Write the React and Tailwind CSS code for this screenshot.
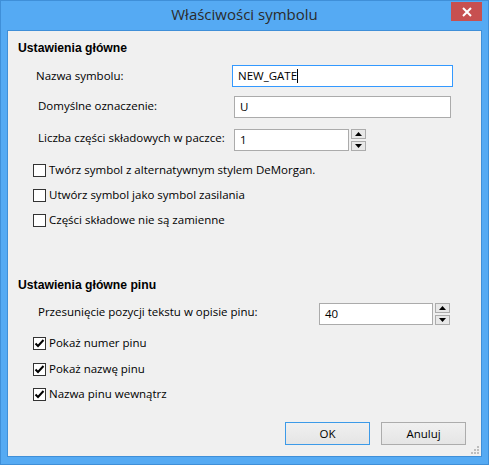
import React from "react";

const ui = { fontFamily: '"Open Sans", "Noto Sans", sans-serif' };
const bold = { fontFamily: '"Liberation Sans", Arial, sans-serif' };

function Spinner() {
  return (
    <div className="flex flex-col gap-[2px] ml-[2px]">
      <div className="w-[15px] h-[10px] bg-[#E8E8E8] border border-[#ACACAC] flex items-center justify-center">
        <svg width="7" height="4" viewBox="0 0 7 4"><path d="M0 4 L3.5 0 L7 4 Z" fill="#000" /></svg>
      </div>
      <div className="w-[15px] h-[10px] bg-[#E8E8E8] border border-[#ACACAC] flex items-center justify-center">
        <svg width="7" height="4" viewBox="0 0 7 4"><path d="M0 0 L3.5 4 L7 0 Z" fill="#000" /></svg>
      </div>
    </div>
  );
}

function CheckRow({ label, checked, className = "" }) {
  return (
    <div className={"flex items-center h-[16px] pl-[25px] " + className}>
      <div className="w-[13px] h-[13px] border border-[#333] bg-white flex items-center justify-center">
        {checked && (
          <svg width="11" height="11" viewBox="0 0 11 11">
            <path d="M1.5 5.5 L4 8 L9.5 2" stroke="#000" strokeWidth="2" fill="none" />
          </svg>
        )}
      </div>
      <span className="ml-[3px] text-[11.5px] text-black leading-none">{label}</span>
    </div>
  );
}

export default function App() {
  return (
    <div className="w-[489px] h-[465px] bg-[#55AAF3] border border-[#3F8FD8] flex flex-col" style={ui}>
      {/* title bar */}
      <div className="relative h-[29px] flex items-center justify-center">
        <span className="text-[15px] text-[#2B2B2B] mt-[-3px]">Właściwości symbolu</span>
        <div className="absolute right-[6px] top-[1px] w-[31px] h-[19px] bg-[#C75050] flex items-center justify-center">
          <svg width="10" height="10" viewBox="0 0 10 10">
            <path d="M1 1 L9 9 M9 1 L1 9" stroke="#fff" strokeWidth="2" />
          </svg>
        </div>
      </div>

      {/* client area */}
      <div className="relative mx-[6px] mb-[7px] flex-1 bg-[#F0F0F0] border border-[#3F8FD8] flex flex-col text-black">
        <div className="pl-[10px] mt-[10px] h-[14px] flex items-center text-[12.2px] font-bold" style={bold}>
          Ustawienia główne
        </div>

        <div className="flex items-center mt-[10px] h-[22px]">
          <span className="pl-[28px] w-[224px] text-[11.5px]">Nazwa symbolu:</span>
          <div className="w-[221px] h-[22px] bg-white border border-[#3399FF] flex items-center pl-[5px] text-[11.5px]">
            NEW_GATE<span className="w-px h-[14px] bg-black" />
          </div>
        </div>

        <div className="flex items-center mt-[9px] h-[22px]">
          <span className="pl-[30px] w-[226px] text-[11.5px] mt-[-3px]">Domyślne oznaczenie:</span>
          <div className="w-[217px] h-[22px] bg-white border border-[#ABABAB] flex items-center pl-[5px] text-[11.5px]">
            U
          </div>
        </div>

        <div className="flex items-center mt-[11px] h-[22px]">
          <span className="pl-[30px] w-[226px] text-[11.5px] mt-[-5px]">Liczba części składowych w paczce:</span>
          <div className="w-[115px] h-[22px] bg-white border border-[#ABABAB] flex items-center pl-[5px] text-[11.5px]">
            1
          </div>
          <Spinner />
        </div>

        <CheckRow className="mt-[11px]" label="Twórz symbol z alternatywnym stylem DeMorgan." />
        <CheckRow className="mt-[9px]" label="Utwórz symbol jako symbol zasilania" />
        <CheckRow className="mt-[9px]" label="Części składowe nie są zamienne" />

        <div className="pl-[10px] mt-[50px] h-[14px] flex items-center text-[12.2px] font-bold" style={bold}>
          Ustawienia główne pinu
        </div>

        <div className="flex items-center mt-[11px] h-[22px]">
          <span className="pl-[30px] w-[311px] text-[11.5px] mt-[-5px]">Przesunięcie pozycji tekstu w opisie pinu:</span>
          <div className="w-[114px] h-[22px] bg-white border border-[#ABABAB] flex items-center pl-[5px] text-[11.5px]">
            40
          </div>
          <Spinner />
        </div>

        <CheckRow className="mt-[10px]" label="Pokaż numer pinu" checked />
        <CheckRow className="mt-[10px]" label="Pokaż nazwę pinu" checked />
        <CheckRow className="mt-[9px]" label="Nazwa pinu wewnątrz" checked />

        <div className="flex justify-end gap-[11px] mt-[20px] pr-[15px]">
          <div className="w-[85px] h-[23px] border border-[#3C9AE8] bg-gradient-to-b from-[#F0F0F0] to-[#E5E5E5] flex items-center justify-center text-[11.5px]">
            OK
          </div>
          <div className="w-[85px] h-[23px] border border-[#ACACAC] bg-gradient-to-b from-[#F0F0F0] to-[#E5E5E5] flex items-center justify-center text-[11.5px]">
            Anuluj
          </div>
        </div>

        {/* resize grip */}
        <svg className="absolute right-[2px] bottom-[2px]" width="8" height="8" viewBox="0 0 8 8">
          <rect x="6" y="0" width="2" height="2" fill="#BDBDBD" />
          <rect x="3" y="3" width="2" height="2" fill="#BDBDBD" />
          <rect x="6" y="3" width="2" height="2" fill="#BDBDBD" />
          <rect x="0" y="6" width="2" height="2" fill="#BDBDBD" />
          <rect x="3" y="6" width="2" height="2" fill="#BDBDBD" />
          <rect x="6" y="6" width="2" height="2" fill="#BDBDBD" />
        </svg>
      </div>
    </div>
  );
}
